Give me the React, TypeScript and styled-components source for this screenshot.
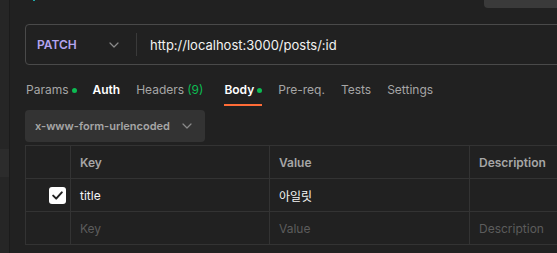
import React from 'react';
import styled, { createGlobalStyle } from 'styled-components';

const GlobalStyle = createGlobalStyle`
  html, body {
    margin: 0;
    padding: 0;
    background: #212121;
    overflow: hidden;
  }
  body {
    font-family: Inter, "Noto Sans CJK KR", sans-serif;
    -webkit-font-smoothing: antialiased;
  }
`;

const Page = styled.div`
  display: flex;
  height: 253px;
  width: 557px;
  overflow: hidden;
  background: #212121;
`;

const Rail = styled.div`
  width: 9px;
  flex-shrink: 0;
  display: flex;
  flex-direction: column;
  background: #262626;
  border-right: 1px solid #1b1b1b;
`;

const RailBlock = styled.div`
  margin-top: 149px;
  height: 28px;
  background: #2c2c2c;
`;

const Main = styled.div`
  flex: 1;
  min-width: 0;
  display: flex;
  flex-direction: column;
  padding-left: 15px;
`;

const TopRow = styled.div`
  height: 24px;
  display: flex;
  justify-content: space-between;
  align-items: flex-start;
`;

const TealDot = styled.div`
  margin-left: 8px;
  width: 2px;
  height: 1px;
  background: #1fa7a7;
`;

const TopButton = styled.div`
  width: 80px;
  height: 8px;
  margin-right: -7px;
  background: #3a3a3a;
  border-bottom-left-radius: 4px;
`;

const UrlBar = styled.div`
  display: flex;
  align-items: center;
  height: 39px;
  width: 600px;
  border: 1px solid #4a4a4a;
  border-radius: 4px;
`;

const MethodPicker = styled.div`
  display: flex;
  align-items: center;
  justify-content: space-between;
  width: 82px;
  padding: 0 17px 0 11px;
  color: #b4a4f0;
  font-size: 12px;
  font-weight: 600;
  border-right: 1px solid #3a3a3a;
  height: 23px;
`;

const UrlText = styled.div`
  padding-left: 13px;
  color: #f2f2f2;
  font-size: 13px;
`;

const Tabs = styled.div`
  display: flex;
  gap: 16px;
  margin-top: 9px;
  padding-left: 1px;
`;

const Tab = styled.div<{ $active?: boolean; $strong?: boolean }>`
  display: flex;
  align-items: center;
  gap: 3px;
  padding: 8px 0 6px;
  line-height: 16px;
  font-size: 12px;
  font-weight: ${p => (p.$active || p.$strong ? 600 : 400)};
  color: ${p => (p.$active || p.$strong ? '#ffffff' : '#a6a6a6')};
  border-bottom: 2px solid ${p => (p.$active ? '#ff6c37' : 'transparent')};
`;

const Dot = styled.span`
  width: 5px;
  height: 5px;
  border-radius: 50%;
  background: #0cbb52;
`;

const Count = styled.span`
  color: #0cbb52;
  margin-right: 5px;
`;

const ModeSelect = styled.div`
  display: flex;
  align-items: center;
  justify-content: space-between;
  align-self: flex-start;
  margin-top: 4px;
  width: 180px;
  height: 32px;
  box-sizing: border-box;
  padding: 0 13px 0 10px;
  background: #333333;
  border-radius: 4px;
  color: #a6a6a6;
  font-size: 11px;
  font-weight: 600;
  white-space: nowrap;
`;

const Table = styled.table`
  margin-top: 3px;
  border-collapse: collapse;
  width: 640px;
  table-layout: fixed;
  font-size: 12px;
`;

const Cell = styled.td<{ $width?: number }>`
  width: ${p => (p.$width ? `${p.$width}px` : 'auto')};
  height: 33px;
  padding: 0 9px;
  border: 1px solid #333333;
  box-sizing: border-box;
`;

const HeadCell = styled(Cell).attrs({ as: 'th' })`
  text-align: left;
  color: #a6a6a6;
  font-weight: 600;
`;

const TextCell = styled(Cell)<{ $placeholder?: boolean }>`
  color: ${p => (p.$placeholder ? '#5c5c5c' : '#f5f5f5')};
`;

const CheckCell = styled(Cell)`
  text-align: right;
  padding: 0 4px 0 0;
`;

const Checkbox = styled.span`
  display: inline-flex;
  align-items: center;
  justify-content: center;
  width: 17px;
  height: 17px;
  background: #ffffff;
  border-radius: 3px;
  vertical-align: middle;
`;

const Chevron = ({ color }: { color: string }) => (
  <svg width="10" height="6" viewBox="0 0 10 6" fill="none">
    <path d="M1 1l4 4 4-4" stroke={color} strokeWidth="1.2" strokeLinecap="round" strokeLinejoin="round" />
  </svg>
);

const App = () => (
  <Page>
    <GlobalStyle />
    <Rail>
      <RailBlock />
    </Rail>
    <Main>
      <TopRow>
        <TealDot />
        <TopButton />
      </TopRow>
      <UrlBar>
        <MethodPicker>
          <span>PATCH</span>
          <Chevron color="#8a8a8a" />
        </MethodPicker>
        <UrlText>http://localhost:3000/posts/:id</UrlText>
      </UrlBar>
      <Tabs>
        <Tab>Params<Dot /></Tab>
        <Tab $strong>Auth</Tab>
        <Tab>Headers <Count>(9)</Count></Tab>
        <Tab $active>Body<Dot /></Tab>
        <Tab>Pre-req.</Tab>
        <Tab>Tests</Tab>
        <Tab>Settings</Tab>
      </Tabs>
      <ModeSelect>
        <span>x-www-form-urlencoded</span>
        <Chevron color="#8a8a8a" />
      </ModeSelect>
      <Table>
        <thead>
          <tr>
            <HeadCell $width={45} />
            <HeadCell $width={199}>Key</HeadCell>
            <HeadCell $width={200}>Value</HeadCell>
            <HeadCell>Description</HeadCell>
          </tr>
        </thead>
        <tbody>
          <tr>
            <CheckCell>
              <Checkbox>
                <svg width="11" height="9" viewBox="0 0 11 9" fill="none">
                  <path d="M1.2 4.6l3 3L9.8 1.4" stroke="#212121" strokeWidth="2" strokeLinecap="round" strokeLinejoin="round" />
                </svg>
              </Checkbox>
            </CheckCell>
            <TextCell>title</TextCell>
            <TextCell>아일릿</TextCell>
            <TextCell />
          </tr>
          <tr>
            <Cell />
            <TextCell $placeholder>Key</TextCell>
            <TextCell $placeholder>Value</TextCell>
            <TextCell $placeholder>Description</TextCell>
          </tr>
        </tbody>
      </Table>
    </Main>
  </Page>
);

export default App;
